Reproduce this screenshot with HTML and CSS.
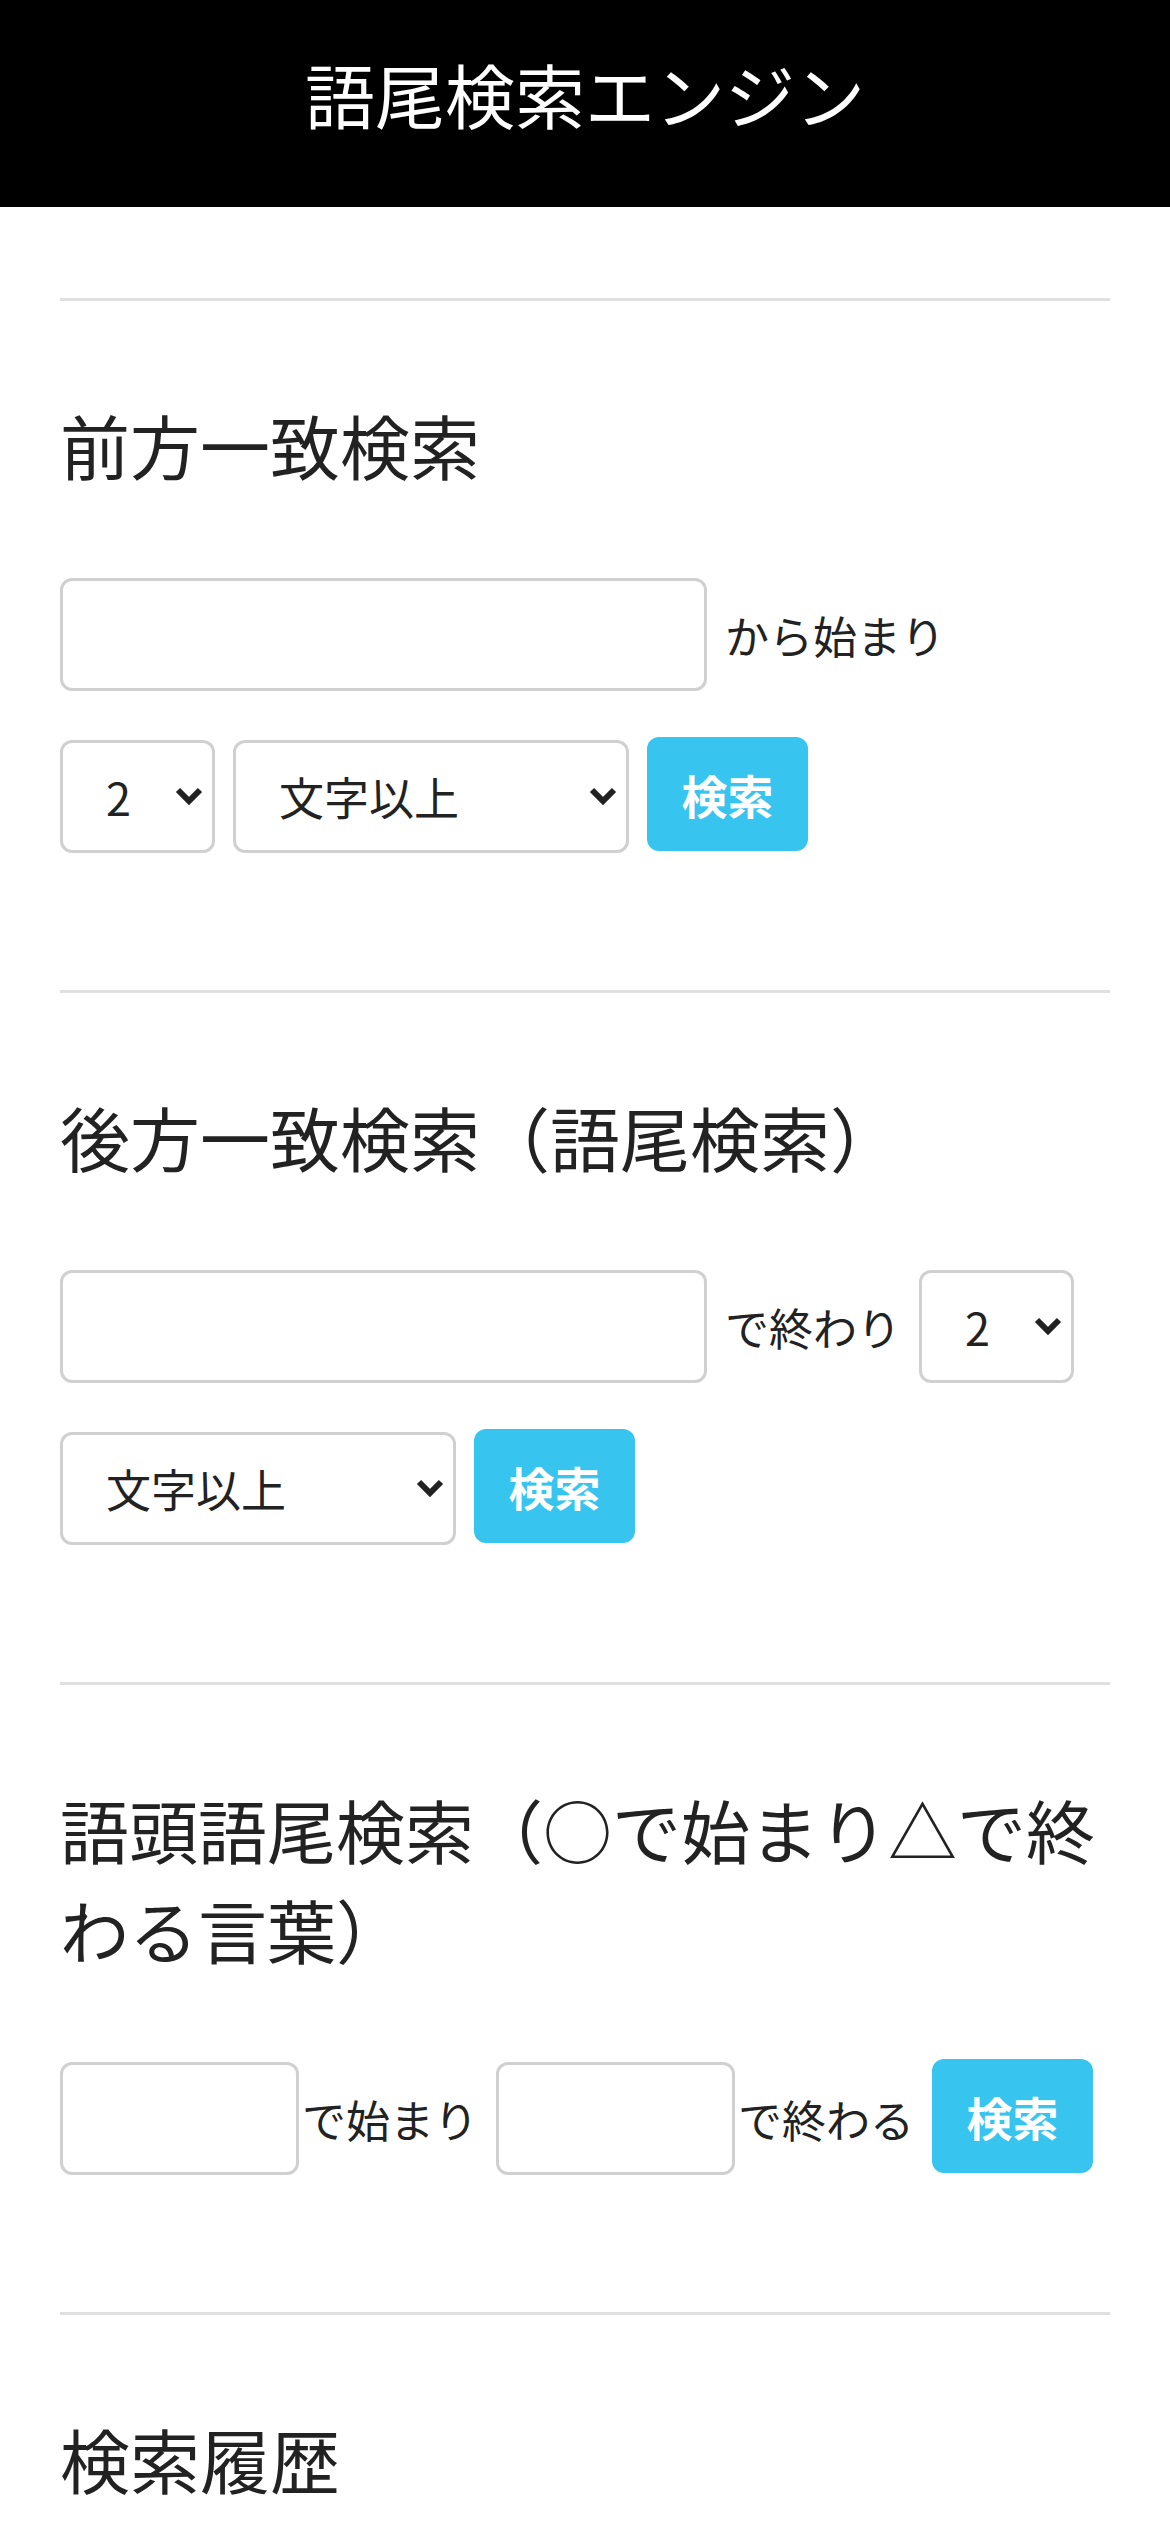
FILE: index.html
```html
<!DOCTYPE html>
<html lang="ja">
<head>
<meta charset="utf-8">
<title>語尾検索エンジン</title>
<link rel="stylesheet" href="styles.css">
</head>
<body>
<header class="site-header">
  <h1 class="site-title">語尾検索エンジン</h1>
</header>
<main class="container">
  <hr class="divider divider-first">
  <section class="search-section">
    <h2 class="section-title">前方一致検索</h2>
    <form class="search-form">
      <div class="form-row">
        <input class="text-input text-input-wide" type="text">
        <span class="form-label">から始まり</span>
      </div>
      <div class="form-row">
        <span class="select-wrap select-num">
          <select class="select"><option>2</option></select>
          <svg class="select-arrow" viewBox="0 0 28 18" width="28" height="18"><polyline points="3,3 14,14 25,3" fill="none" stroke="#222" stroke-width="6" stroke-linejoin="miter"/></svg>
        </span>
        <span class="select-wrap select-cond">
          <select class="select"><option>文字以上</option></select>
          <svg class="select-arrow" viewBox="0 0 28 18" width="28" height="18"><polyline points="3,3 14,14 25,3" fill="none" stroke="#222" stroke-width="6" stroke-linejoin="miter"/></svg>
        </span>
        <button class="search-button" type="button">検索</button>
      </div>
    </form>
  </section>
  <hr class="divider">
  <section class="search-section">
    <h2 class="section-title">後方一致検索（語尾検索）</h2>
    <form class="search-form">
      <div class="form-row">
        <input class="text-input text-input-wide" type="text">
        <span class="form-label">で終わり</span>
        <span class="select-wrap select-num">
          <select class="select"><option>2</option></select>
          <svg class="select-arrow" viewBox="0 0 28 18" width="28" height="18"><polyline points="3,3 14,14 25,3" fill="none" stroke="#222" stroke-width="6" stroke-linejoin="miter"/></svg>
        </span>
      </div>
      <div class="form-row">
        <span class="select-wrap select-cond">
          <select class="select"><option>文字以上</option></select>
          <svg class="select-arrow" viewBox="0 0 28 18" width="28" height="18"><polyline points="3,3 14,14 25,3" fill="none" stroke="#222" stroke-width="6" stroke-linejoin="miter"/></svg>
        </span>
        <button class="search-button" type="button">検索</button>
      </div>
    </form>
  </section>
  <hr class="divider">
  <section class="search-section">
    <h2 class="section-title section-title-compact">語頭語尾検索（○で始まり△で終わる言葉）</h2>
    <form class="search-form">
      <div class="form-row">
        <input class="text-input text-input-small" type="text">
        <span class="form-label form-label-tight">で始まり</span>
        <input class="text-input text-input-small" type="text">
        <span class="form-label form-label-tight">で終わる</span>
        <button class="search-button" type="button">検索</button>
      </div>
    </form>
  </section>
  <hr class="divider">
  <section class="search-section">
    <h2 class="section-title">検索履歴</h2>
  </section>
</main>
</body>
</html>
```
FILE: styles.css
```css
* {
  box-sizing: border-box;
}

html, body {
  margin: 0;
  padding: 0;
  background: #ffffff;
}

body {
  font-family: "Noto Sans CJK JP", "Noto Sans", sans-serif;
  color: #222222;
}

.site-header {
  height: 207px;
  background: #000000;
  display: flex;
  align-items: center;
  justify-content: center;
  padding-bottom: 20px;
}

.site-title {
  margin: 0;
  font-size: 70px;
  font-weight: 400;
  line-height: 100px;
  color: #ffffff;
}

.container {
  padding: 0 60px;
}

.divider {
  margin: 0;
  border: 0;
  height: 3px;
  background: #e0e0e0;
}

.divider-first {
  margin-top: 91px;
}

.search-section {
  padding-bottom: 137px;
}

.section-title {
  margin: 94px 0 83px;
  font-size: 70px;
  font-weight: 400;
  line-height: 100px;
  color: #222222;
}

.section-title-compact {
  font-size: 69px;
}

.search-form {
  display: flex;
  flex-direction: column;
  gap: 49px;
}

.form-row {
  display: flex;
  align-items: center;
  gap: 18px;
}

.text-input {
  height: 113px;
  border: 3px solid #d0d0d0;
  border-radius: 12px;
  background: #ffffff;
  font: inherit;
  font-size: 44px;
  padding: 0 24px;
  outline: none;
}

.text-input-wide {
  width: 647px;
}

.text-input-small {
  width: 239px;
}

.form-label {
  font-size: 44px;
  line-height: 60px;
  white-space: nowrap;
}

.form-label-tight {
  margin-left: -15px;
}

.select-wrap {
  position: relative;
  display: block;
  height: 113px;
}

.select-num {
  width: 155px;
}

.select-cond {
  width: 396px;
}

.select {
  appearance: none;
  -webkit-appearance: none;
  width: 100%;
  height: 100%;
  border: 3px solid #d0d0d0;
  border-radius: 12px;
  background: #ffffff;
  font: inherit;
  font-size: 45px;
  color: #222222;
  padding: 0 0 0 43px;
  outline: none;
}

.select-arrow {
  position: absolute;
  right: 12px;
  top: 47px;
  pointer-events: none;
}

.search-button {
  width: 161px;
  height: 114px;
  border: 0;
  border-radius: 12px;
  background: #37c5ef;
  color: #ffffff;
  font: inherit;
  font-size: 46px;
  font-weight: 700;
  margin-top: -5px;
  padding: 0;
}
```
